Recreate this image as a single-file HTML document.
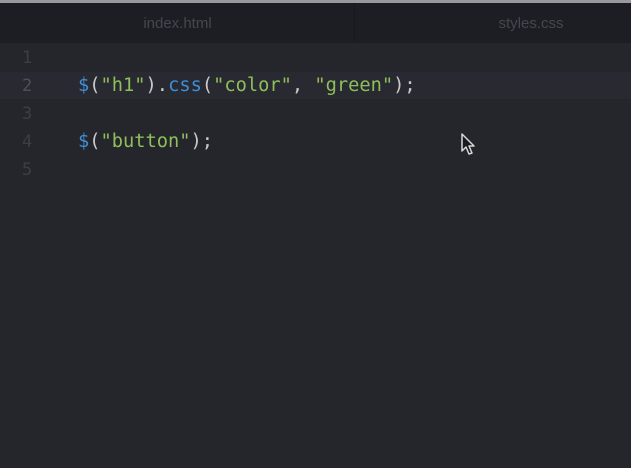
<!DOCTYPE html>
<html><head><meta charset="utf-8"><style>
html,body{margin:0;padding:0;width:631px;height:468px;overflow:hidden;background:#25262c;font-family:"Liberation Sans",sans-serif}
.top{position:absolute;left:0;top:0;width:631px;height:3px;background:#9a9a9c}
.tabs{position:absolute;left:0;top:3px;width:631px;height:40px;background:#1d1e23}
.tab{position:absolute;top:1px;height:40px;line-height:40px;color:#454750;font-size:15px;text-align:center}
.div{position:absolute;left:354px;top:3px;width:1px;height:40px;background:#18191d}
.hl{position:absolute;left:0;top:72px;width:631px;height:27px;background:#292a31}
.ln{position:absolute;left:22px;font-family:"DejaVu Sans Mono",monospace;font-size:17px;color:#3c3e46}
.code{position:absolute;left:78px;font-family:"DejaVu Sans Mono",monospace;font-size:18.7px;color:#c8c8c8;white-space:pre}
.b{color:#3e8fd6}.g{color:#8fbf5a}.w{color:#c9c9c9}
</style></head><body>
<div class="top"></div>
<div class="tabs">
<div class="tab" style="left:0;width:355px">index.html</div>
<div class="tab" style="left:355px;width:352px">styles.css</div>
</div>
<div class="div"></div>
<div class="hl"></div>
<div class="ln" style="top:48px">1</div>
<div class="ln" style="top:76px;color:#4e5058">2</div>
<div class="ln" style="top:104px">3</div>
<div class="ln" style="top:132px">4</div>
<div class="ln" style="top:160px">5</div>
<div class="code" style="top:75px"><span class="b">$</span><span class="w">(</span><span class="g">"h1"</span><span class="w">).</span><span class="b">css</span><span class="w">(</span><span class="g">"color"</span><span class="w">, </span><span class="g">"green"</span><span class="w">);</span></div>
<div class="code" style="top:131px"><span class="b">$</span><span class="w">(</span><span class="g">"button"</span><span class="w">);</span></div>
<svg style="position:absolute;left:460px;top:132px" width="20" height="26" viewBox="0 0 20 26">
<path d="M2 2 L2 19 L6 15 L9 22 L12 21 L9 14 L14 14 Z" fill="#1a1a1e" stroke="#d8d8d8" stroke-width="1.5" stroke-linejoin="round"/>
</svg>
</body></html>
